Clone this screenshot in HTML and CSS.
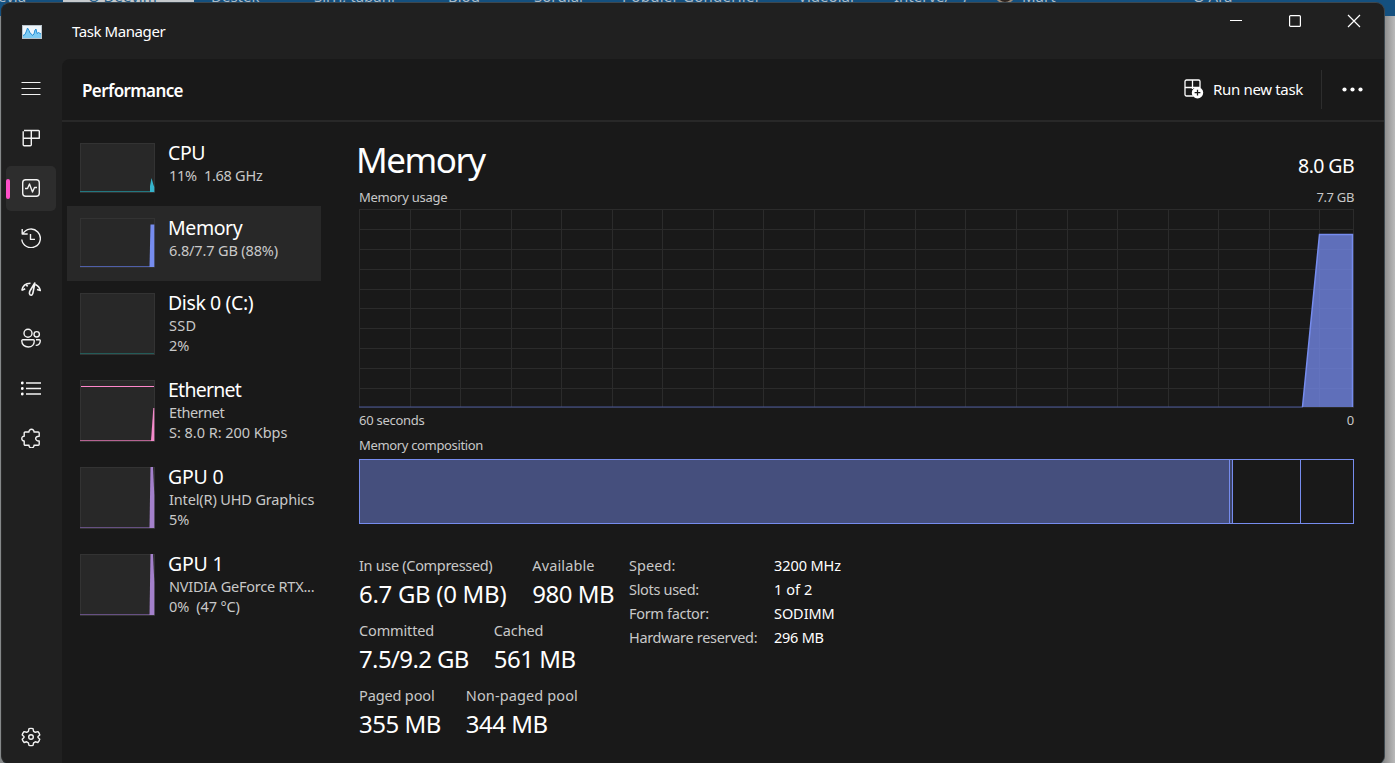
FILE: index.html
```
<!DOCTYPE html>
<html lang="en">
<head>
<meta charset="utf-8">
<title>Task Manager</title>
<link rel="stylesheet" href="styles.css">
</head>
<body>
<div class="desktop">
  <div class="browser">
    <div class="tab-active"></div>
    <span class="bm bm-edge">eyla</span><span class="bm bm-sel">Q Deeyim</span><span class="bm bm-destek">Destek</span><span class="bm bm-sirri">Sırrı, tabanı</span><span class="bm bm-blog">Blog</span><span class="bm bm-sor">Sorular</span><span class="bm bm-pop">Popüler Gönderiler</span><span class="bm bm-vid">Videolar</span><span class="bm bm-int">İnterye/&nbsp;&nbsp;&nbsp;)</span><i class="avatar"></i><span class="bm bm-mart">Mart</span><span class="bm bm-ara">Q Ara</span>
  </div>
  <main class="window">
    <header class="titlebar">
      <svg class="app-icon" width="20" height="14" viewBox="0 0 20 14"><rect width="20" height="14" fill="#b9c4cc"/><rect x="1" y="1" width="18" height="12" fill="#eef6fb"/><path d="M1 10.500 3 9.500 4.500 6 5.500 3 7 5.500 8 8 9.500 9 10.500 10.500 12 9 13 5 14 4 15 8.500 16.500 7.500 19 9V13H1z" fill="#7ccbf3"/><path d="M1 10.500 3 9.500 4.500 6 5.500 3 7 5.500 8 8 9.500 9 10.500 10.500 12 9 13 5 14 4 15 8.500 16.500 7.500 19 9" fill="none" stroke="#268fd6"/></svg>
      <span class="app-name">Task Manager</span>
      <div class="controls">
        <svg width="12" height="12" viewBox="0 0 12 12"><path d="M0 5.500h12"/></svg>
        <svg width="12" height="12" viewBox="0 0 12 12"><rect x=".6" y=".6" width="10.800" height="10.800" rx="1"/></svg>
        <svg width="12" height="12" viewBox="0 0 12 12"><path d="m0 0 12 12M12 0 0 12"/></svg>
      </div>
    </header>
    <div class="shell">
      <nav class="rail">
        <a class="nav"><svg viewBox="0 0 20 20"><path d="M.5 4.500h19M.5 10.500h19M.5 16.500h19" stroke-width="1.200"/></svg></a>
        <a class="nav"><svg viewBox="0 0 20 20"><path d="M3 2.500h14.500a.8.8 0 0 1 .8.8v6.900H2M2.200 3.300v13.400a1 1 0 0 0 1 1h6.100a1 1 0 0 0 1-1V2.500"/></svg></a>
        <a class="nav active"><span class="nav-bg"><svg viewBox="0 0 20 20"><rect x="1.700" y="1.700" width="16.600" height="16.600" rx="3"/><path d="M4 10.500h2.500L8.500 6l3 8 2-4.500H16"/></svg></span></a>
        <a class="nav"><svg viewBox="0 0 20 20"><path d="M1.200 1v5h5.500M1.800 6A9.300 9.300 0 1 1 .8 11.500M9.500 6v5.400h4.500"/></svg></a>
        <a class="nav"><svg viewBox="0 0 20 20"><path d="M.8 12.500C1.500 8 5 5.300 9.500 5.200M1 12.300l3.200-1.500M5.300 6.500 6.600 8.500M13.800 5 9.200 12.500C7.800 15 8.500 17.300 10.200 17.200 12 17 12 14.500 12.400 12.500zM14.500 6.500C17 7.700 18.700 9.700 19.300 12.500L16 11.500" stroke-width="1.600"/></svg></a>
        <a class="nav"><svg viewBox="0 0 20 20"><circle cx="7" cy="5.200" r="4"/><circle cx="15.700" cy="6.300" r="2.700"/><path d="M2 11.800h10.300a1 1 0 0 1 1 1c0 3.700-2.400 6.200-6 6.200S.8 16.700.8 13a1 1 0 0 1 1-1.200zM15 11.800h3.300a1 1 0 0 1 1 1c-.1 3-2 4.700-4.600 4.600"/></svg></a>
        <a class="nav"><svg viewBox="0 0 20 20"><path d="M5 5h15M5 10.500h15M5 16h15" stroke-width="1.500"/><g fill="#fff" stroke="none"><circle cx="1.300" cy="5" r="1.400"/><circle cx="1.300" cy="10.500" r="1.400"/><circle cx="1.300" cy="16" r="1.400"/></g></svg></a>
        <a class="nav"><svg viewBox="0 0 20 20"><path d="M4.200 4H8C7.800.4 13.200.4 13 4h4.200a1 1 0 0 1 1 1v3.200c-4.700-.2-4.700 5 0 4.800v3.200a1 1 0 0 1-1 1H13c.2 3.500-5.200 3.500-5 0H4.200a1 1 0 0 1-1-1V13c-3.200.2-3.200-5 0-4.800V5a1 1 0 0 1 1-1z"/></svg></a>
        <a class="nav settings"><svg viewBox="0 0 20 20"><circle cx="10" cy="10" r="2.300"/><path d="M8 1.700c1.300-.4 2.700-.4 4 0l.6 2.600 1.700 1 2.600-.7c.9.900 1.600 2.100 1.900 3.400L17 9.600v1l1.800 1.600c-.3 1.200-1 2.400-1.900 3.300l-2.600-.7-1.700 1-.6 2.500c-1.300.4-2.700.4-4 0l-.6-2.500-1.700-1-2.600.7c-.9-.9-1.600-2.100-1.900-3.300L3 10.600v-1L1.200 8c.3-1.300 1-2.500 1.900-3.400l2.600.7 1.700-1z"/></svg></a>
      </nav>
      <section class="panel">
        <div class="page-head">
          <h1>Performance</h1>
          <button class="run"><svg width="20" height="20" viewBox="0 0 20 20"><path d="M9 17H2.500A1.500 1.500 0 0 1 1 15.500v-13A1.500 1.500 0 0 1 2.500 1h12A1.500 1.500 0 0 1 16 2.500V8.500H1M8.500 1v9" fill="none" stroke="#fff" stroke-width="1.300"/><circle cx="13.500" cy="13.700" r="5.700" fill="#fff"/><path d="M13.500 10.800v5.800M10.600 13.700h5.800" stroke="#191919" stroke-width="1.300"/></svg>Run new task</button>
          <div class="more"><svg width="21" height="5" viewBox="0 0 21 5"><circle cx="2.500" cy="2.500" r="2.100"/><circle cx="10.500" cy="2.500" r="2.100"/><circle cx="18.500" cy="2.500" r="2.100"/></svg></div>
        </div>
        <div class="content">
          <div class="devices">
            <article class="device"><svg class="thumb" viewBox="0 0 75 50"><rect class="frame" x=".5" y=".5" width="74" height="49"/><path d="M0 48.500h74" stroke="#227780"/><path d="M70 49V43l1.500-8 2 7 .8 2v5z" fill="#35b3cb"/></svg><div class="info"><h2 class="snug">CPU</h2><p class="snug2">11%&nbsp; 1.68 GHz</p></div></article>
            <article class="device selected"><svg class="thumb" viewBox="0 0 75 50"><rect class="frame" x=".5" y=".5" width="74" height="49"/><path d="M0 48.500h74" stroke="#4f5fa8"/><path d="M69.500 49 70.500 6.500h3.800V49z" fill="#768cee"/></svg><div class="info"><h2>Memory</h2><p>6.8/7.7 GB (88%)</p></div></article>
            <article class="device tall"><svg class="thumb" viewBox="0 0 75 62"><rect class="frame" x=".5" y=".5" width="74" height="61"/><path d="M0 60.500h74" stroke="#235b58"/></svg><div class="info"><h2>Disk 0 (C:)</h2><p class="wide">SSD</p><p>2%</p></div></article>
            <article class="device tall"><svg class="thumb" viewBox="0 0 75 62"><rect class="frame" x=".5" y=".5" width="74" height="61"/><path d="M1 6.500h73" stroke="#ff87cb"/><path d="M0 60.500h74" stroke="#b56391"/><path d="M71 61 73.300 28h1v33z" fill="#f58acb"/></svg><div class="info"><h2 class="tight">Ethernet</h2><p class="snug">Ethernet</p><p class="even">S: 8.0 R: 200 Kbps</p></div></article>
            <article class="device tall"><svg class="thumb" viewBox="0 0 75 62"><rect class="frame" x=".5" y=".5" width="74" height="61"/><path d="M0 60.500h74" stroke="#665082"/><path d="M69.500 61 70.500 0h2.500l1.300 28v33z" fill="#a380cb"/></svg><div class="info"><h2 class="even">GPU 0</h2><p>Intel(R) UHD Graphics</p><p>5%</p></div></article>
            <article class="device tall"><svg class="thumb" viewBox="0 0 75 62"><rect class="frame" x=".5" y=".5" width="74" height="61"/><path d="M0 60.500h74" stroke="#665082"/><path d="M69.500 61 70.500 0h2.500l1.300 28v33z" fill="#a380cb"/></svg><div class="info"><h2 class="even">GPU 1</h2><p class="nv">NVIDIA GeForce RTX...</p><p>0%&nbsp; (47 °C)</p></div></article>
          </div>
          <div class="detail">
            <div class="detail-head"><h2>Memory</h2><span>8.0 GB</span></div>
            <div class="caption"><span>Memory usage</span><span class="tight">7.7 GB</span></div>
            <svg class="graph" width="995" height="199" viewBox="0 0 995 199">
              <path class="grid" d="M.5 0v199M51.500 0v199M101.500 0v199M152.500 0v199M202.500 0v199M253.500 0v199M303.500 0v199M354.500 0v199M404.500 0v199M455.500 0v199M505.500 0v199M556.500 0v199M606.500 0v199M657.500 0v199M708.500 0v199M758.500 0v199M809.500 0v199M859.500 0v199M910.500 0v199M960.500 0v199M994.500 0v199M0 .5h995M0 20.500h995M0 40.500h995M0 60.500h995M0 80.500h995M0 99.500h995M0 119.500h995M0 139.500h995M0 159.500h995M0 179.500h995M0 198.500h995"/>
              <path d="M0 198h944" stroke="#4b599a"/>
              <path d="M943.500 198 960.500 25.500H993.500V198z" fill="#7388e8" fill-opacity=".78"/>
              <path d="M943.500 198 960.500 25.500H993.500V198" fill="none" stroke="#768cee" stroke-width="1.500"/>
            </svg>
            <div class="caption axis"><span>60 seconds</span><span>0</span></div>
            <div class="caption comp"><span class="tight">Memory composition</span></div>
            <div class="composition"><div class="used"></div><div class="modified"></div><div class="standby"></div><div class="free"></div></div>
            <div class="stats">
              <div class="figures">
                <div class="pair gap-a"><dl><dt>In use (Compressed)</dt><dd>6.7 GB (0 MB)</dd></dl><dl><dt class="wide">Available</dt><dd class="tight">980 MB</dd></dl></div>
                <div class="pair"><dl><dt class="even">Committed</dt><dd class="tighter">7.5/9.2 GB</dd></dl><dl><dt class="even">Cached</dt><dd class="tight">561 MB</dd></dl></div>
                <div class="pair"><dl><dt class="even">Paged pool</dt><dd class="tight">355 MB</dd></dl><dl><dt class="wide">Non-paged pool</dt><dd class="tight">344 MB</dd></dl></div>
              </div>
              <div class="specs">
                <span class="k wide">Speed:</span><span>3200 MHz</span>
                <span class="k snug">Slots used:</span><span class="wide">1 of 2</span>
                <span class="k snug">Form factor:</span><span>SODIMM</span>
                <span class="k snug">Hardware reserved:</span><span class="close">296 MB</span>
              </div>
            </div>
          </div>
        </div>
      </section>
    </div>
  </main>
</div>
</body>
</html>
```
FILE: styles.css
```
* { box-sizing: border-box; }
body { margin: 0; overflow: hidden; font-family: "Noto Sans", "Open Sans", sans-serif; color: #fff; }
h1, h2, p, dl, dt, dd { margin: 0; font-weight: 400; }
.desktop { position: relative; width: 1395px; height: 763px; overflow: hidden; padding: 2px 0 0 1px; background: linear-gradient(90deg, #858889 0 1384px, #8f8f8f 1385px, #b9b9b9 1395px); }

/* browser window peeking out behind the app */
.browser { position: absolute; left: 0; top: 0; width: 1395px; height: 16px; overflow: hidden; background: #14507f; }
.tab-active { position: absolute; left: 63px; top: 0; width: 131px; height: 3px; background: #c6cacd; }
.bm { position: absolute; top: -14px; font-size: 15px; line-height: 20px; color: #a9bccb; white-space: nowrap; }
.bm-edge { left: -2px; }
.bm-sel { left: 88px; color: #225c86; }
.bm-destek { left: 211px; }
.bm-sirri { left: 314px; }
.bm-blog { left: 448px; }
.bm-sor { left: 534px; }
.bm-pop { left: 622px; letter-spacing: .25px; }
.bm-vid { left: 798px; }
.bm-int { left: 894px; }
.bm-mart { left: 1022px; }
.bm-ara { left: 1193px; }
.avatar { position: absolute; left: 995px; top: -16px; width: 20px; height: 20px; border-radius: 50%; background: #2b2320; border: 2px solid #9a8a78; }

.window { position: relative; width: 1384px; height: 763px; overflow: hidden; background: #202020; border: 1px solid #3d474e; border-left-color: #2a2a2a; border-radius: 9px; }
.titlebar { display: flex; align-items: center; height: 56px; padding: 0 24px 1px 20px; }
.app-icon { margin-top: 2px; }
.app-name { flex: 1; margin-left: 30px; font-size: 15px; line-height: 20px; letter-spacing: -.42px; }
.controls { display: flex; gap: 47px; align-self: flex-start; padding-top: 12px; }
.controls svg { fill: none; stroke: #fff; stroke-width: 1.200; overflow: visible; }

.shell { display: flex; height: 705px; }
.rail { display: flex; flex-direction: column; width: 60px; height: 704px; padding: 4px 0 1px; }
.nav { display: flex; align-items: center; justify-content: center; height: 50px; padding-right: 2px; }
.nav svg { width: 20px; height: 20px; fill: none; stroke: #f2f2f2; stroke-width: 1.400; stroke-linejoin: round; }
.nav-bg { display: flex; align-items: center; justify-content: center; width: 50px; height: 45px; border-radius: 5px; background: #2d2d2d; position: relative; }
.nav-bg::before { content: ""; position: absolute; left: 0; top: 13px; width: 4px; height: 20px; border-radius: 2px; background: #ff4fc8; }
.settings { margin-top: auto; }

.panel { flex: 1; background: #191919; border-top-left-radius: 8px; }
.page-head { display: flex; align-items: center; height: 63px; padding: 0 21px 0 20px; border-bottom: 2px solid #282828; }
.page-head h1 { flex: 1; font-size: 17px; font-weight: 600; letter-spacing: -.6px; padding-top: 1px; }
.run { display: flex; align-items: center; gap: 9px; padding: 0 18px 2px 0; border: 0; background: none; color: #fff; font: 15px/20px "Noto Sans", sans-serif; letter-spacing: -.33px; }
.more { display: flex; align-items: center; height: 39px; padding-left: 20px; border-left: 1px solid #2d2d2d; }
.more svg { fill: #fff; }

.content { display: flex; padding-top: 9px; }
.devices { width: 254px; margin-left: 5px; }
.device { display: flex; gap: 13px; height: 75px; padding-left: 13px; }
.device.tall { height: 87px; }
.device.selected { background: #282828; }
.thumb { width: 75px; height: 50px; margin-top: 12px; fill: none; }
.tall .thumb { height: 62px; }
.frame { fill: #282828; stroke: #333; }
.info { padding-top: 10px; white-space: nowrap; }
.info h2 { font-size: 19.500px; line-height: 24px; letter-spacing: -.4px; }
.info h2.tight { letter-spacing: -.75px; }
.info h2.even { letter-spacing: -.2px; }
.info p { padding-left: 1px; font-size: 14.500px; line-height: 20px; letter-spacing: -.14px; color: #c8c8c8; }
.info p.wide { letter-spacing: .3px; }
.info p.snug { letter-spacing: -.42px; }
.info p.snug2 { letter-spacing: -.26px; }
.info p.even { letter-spacing: -.03px; }
.info p.nv { letter-spacing: -.22px; }

.detail { width: 995px; margin-left: 38px; padding-top: 5px; }
.detail-head { display: flex; justify-content: space-between; align-items: baseline; height: 52px; }
.detail-head h2 { font-size: 35px; line-height: 48px; letter-spacing: -1.500px; margin-left: -3px; }
.detail-head span { font-size: 19.500px; letter-spacing: -.6px; }
.caption { display: flex; justify-content: space-between; height: 21px; font-size: 13px; line-height: 18px; letter-spacing: -.26px; color: #c8c8c8; }
.caption .tight { letter-spacing: -.34px; }
.graph { display: block; }
.grid { fill: none; stroke: #2b2b2b; }
.caption.axis { margin-top: 3px; height: 25px; }
.caption.comp { height: 23px; }
.composition { display: flex; height: 65px; border: 1px solid #768cee; }
.composition div { border-right: 1px solid #768cee; }
.composition .used { width: 870px; background: #454f7d; }
.composition .modified { width: 3px; background: #3b4367; }
.composition .standby { width: 68px; }
.composition .free { flex: 1; border: 0; }

.stats { display: flex; padding-top: 31px; white-space: nowrap; }
.figures { width: 270px; }
.pair { display: flex; gap: 25px; height: 65px; }
.figures dt { font-size: 14.500px; line-height: 20px; letter-spacing: -.32px; color: #c8c8c8; }
.figures dt.wide { letter-spacing: .12px; }
.figures dt.even { letter-spacing: -.14px; }
.figures dd { padding-top: 1px; font-size: 24px; line-height: 36px; letter-spacing: -.3px; }
.gap-a { gap: 26px; }
.figures dd.tight { letter-spacing: -.5px; }
.figures dd.tighter { letter-spacing: -.62px; }
.specs { display: grid; grid-template-columns: 145px auto; grid-auto-rows: 24px; margin-top: -2px; font-size: 14.500px; line-height: 24px; letter-spacing: -.08px; }
.specs .k { color: #c8c8c8; letter-spacing: -.18px; }
.specs .wide { letter-spacing: .08px; }
.specs .k.snug { letter-spacing: -.32px; }
.specs .close { letter-spacing: -.24px; }
```
